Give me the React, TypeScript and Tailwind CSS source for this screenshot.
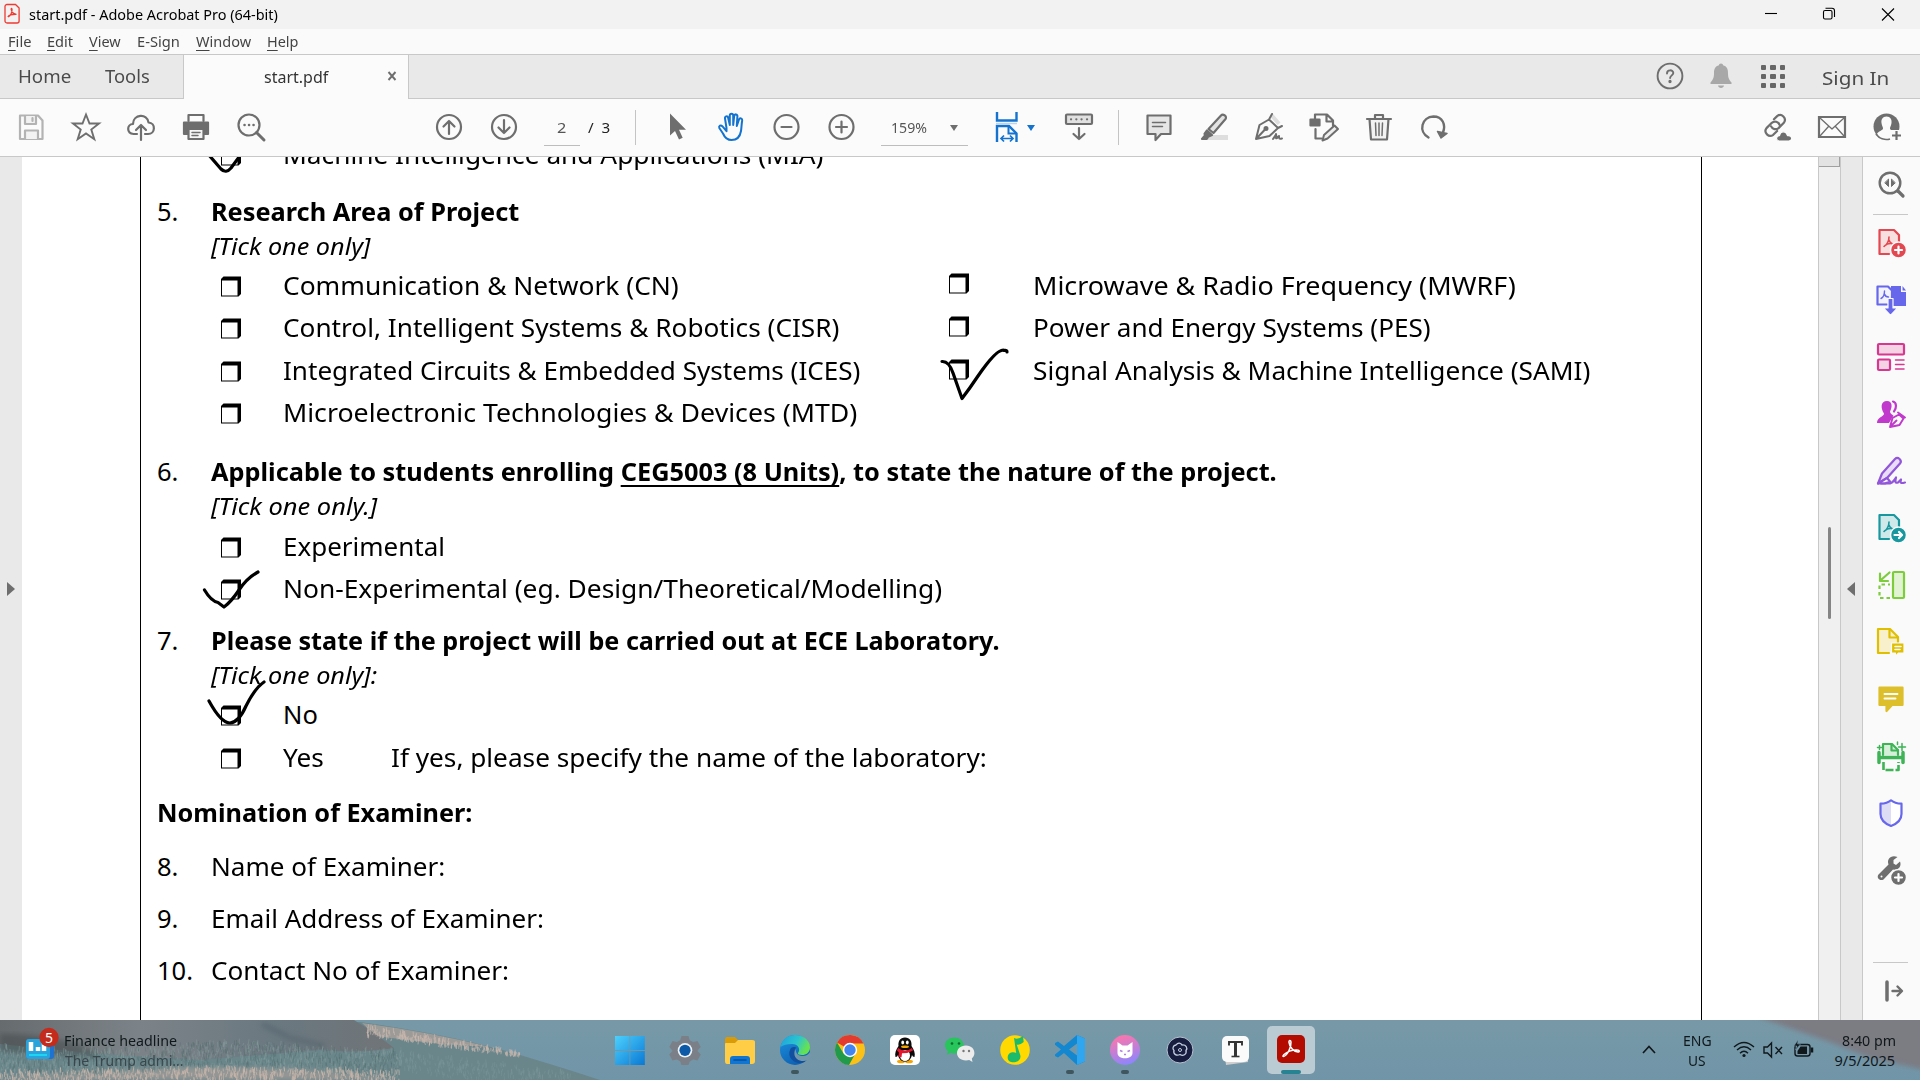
import React, { useLayoutEffect, useRef, useState } from "react";

/* Text squeezed or stretched horizontally so that it fills a known width. */
function Fit({ w, className = "", children }: { w: number; className?: string; children: React.ReactNode }) {
  const ref = useRef<HTMLSpanElement>(null);
  const [s, setS] = useState(1);
  useLayoutEffect(() => {
    if (ref.current) setS(w / ref.current.offsetWidth);
  }, [w]);
  return (
    <span className="block shrink-0" style={{ width: w }}>
      <span ref={ref} className={"inline-block origin-left whitespace-nowrap " + className} style={{ transform: `scaleX(${s})` }}>
        {children}
      </span>
    </span>
  );
}

function Ic({ children, c = "#6e6e6e", sw = 2.2 }: { children: React.ReactNode; c?: string; sw?: number }) {
  return (
    <svg width="32" height="32" viewBox="0 0 32 32" fill="none" stroke={c} color={c} strokeWidth={sw} strokeLinejoin="round" strokeLinecap="round" className="block shrink-0">
      {children}
    </svg>
  );
}

function Slot({ children }: { children?: React.ReactNode }) {
  return <div className="flex w-[55px] shrink-0 justify-center">{children}</div>;
}

/* ---------- window chrome ---------- */

function TitleBar() {
  return (
    <div className="flex h-[29px] shrink-0 items-center bg-[#f2f2f2] text-[14.5px] text-black">
      <svg width="17" height="22" viewBox="0 0 17 22" className="ml-1 -mt-0.5" fill="none" stroke="#ee3a30" strokeWidth="1.3">
        <path d="M3 1.5h8.5l3.6 3.6V18a2 2 0 0 1-2 2H3a2 2 0 0 1-2-2V3.500a2 2 0 0 1 2-2z" />
        <path d="M4 14c2-1 4-4 4-7.500 0-1.500-1-1.300-.8 0 .4 2.500 3 5 5.300 4.800M4 14c0-1.500 4-3 8.500-2.700" />
      </svg>
      <div className="ml-2 flex-1">
        <Fit w={249}>start.pdf - Adobe Acrobat Pro (64-bit)</Fit>
      </div>
      <svg width="150" height="29" viewBox="0 0 150 29" className="mr-5" fill="none" stroke="#000" strokeWidth="1.1">
        <path d="M15 13.500h12" />
        <rect x="73.500" y="10.500" width="8.500" height="8.500" rx="1.500" />
        <path d="M75.500 8.300H82a2.500 2.500 0 0 1 2.500 2.500V17" />
        <path d="M132 8.500l12 12M144 8.500l-12 12" />
      </svg>
    </div>
  );
}

const menus: [string, string, number, string][] = [
  ["F", "ile", 23, "mr-4"],
  ["E", "dit", 26, "mr-4"],
  ["V", "iew", 32, "mr-4"],
  ["", "E-Sign", 43, "mr-4"],
  ["W", "indow", 55, "mr-4"],
  ["H", "elp", 32, ""],
];

function MenuBar() {
  return (
    <div className="flex h-[26px] shrink-0 items-center border-b border-[#c8c8c8] bg-[#fafafa] pl-2 text-[14px] text-[#444]">
      {menus.map(([k, r, w, m]) => (
        <div key={r} className={m}>
          <Fit w={w}>
            <span className="underline underline-offset-[3px]">{k}</span>
            {r}
          </Fit>
        </div>
      ))}
    </div>
  );
}

function TabBar() {
  return (
    <div className="flex h-[44px] shrink-0 bg-[#e9e9e9] text-[#4b4b4b]">
      <div className="flex w-[184px] items-center border-b border-r border-[#c8c8c8] pl-[18px] text-[18px]">
        <Fit w={53}>Home</Fit>
        <div className="ml-[34px]">
          <Fit w={45}>Tools</Fit>
        </div>
      </div>
      <div className="flex w-[224px] items-center bg-[#fbfbfb] pl-[80px] text-[16.5px] text-[#333]">
        <Fit w={64}>start.pdf</Fit>
        <svg width="10" height="10" viewBox="0 0 10 10" className="ml-[59px] -mt-[2px]" stroke="#6e6e6e" strokeWidth="1.900">
          <path d="M1.500 1l7 8M8.500 1l-7 8" />
        </svg>
      </div>
      <div className="flex flex-1 items-center justify-end border-b border-l border-[#c8c8c8] pr-[31px]">
        <div className="-mt-[1px]">
          <Ic sw={1.9}>
            <circle cx="16" cy="16" r="12.400" />
            <path d="M13 13.500c0-4.300 6.300-4 6.300-.5 0 2.300-3.200 2.500-3.200 5" />
            <circle cx="16" cy="21.500" r=".7" fill="currentColor" />
          </Ic>
        </div>
        <div className="ml-[19px] -mt-[1px]">
          <svg width="32" height="32" viewBox="0 0 32 32" fill="#a8a8a8">
            <path d="M16 3.500c1.300 0 2 .8 2 1.800 4 1 5 4 5 7.700 0 5 1 6.700 3.500 9.500v1.500h-21v-1.500C8 19.700 9 18 9 13c0-3.700 1-6.700 5-7.700 0-1 .7-1.800 2-1.800z" />
            <path d="M13 25.500h6c-.3 3.300-5.700 3.300-6 0z" />
          </svg>
        </div>
        <div className="ml-[24px] grid w-[24px] grid-cols-3 gap-[4px]">
          {[...Array(9)].map((_, i) => (
            <span key={i} className="h-[5.300px] rounded-[1px] bg-[#666]" />
          ))}
        </div>
        <div className="ml-[37px] mt-[2px] text-[18.5px]">
          <Fit w={67}>Sign In</Fit>
        </div>
      </div>
    </div>
  );
}

function Toolbar() {
  return (
    <div className="flex h-[58px] shrink-0 items-center border-b border-[#c8c8c8] bg-[#fbfbfb] pb-[2px] pl-[3px] text-[14.5px]">
      <Slot>
        <Ic c="#b3b3b3">
          <path d="M5 4.500h18l4.500 5V28H5z" />
          <path d="M10 5v8h11V5M10 28v-8.500h13V28" fill="#f2f2f2" />
          <path d="M17.500 7v3" />
        </Ic>
      </Slot>
      <Slot>
        <Ic sw={1.9}>
          <path strokeLinejoin="miter" d="M16 3.500l3.500 9h9.500l-7.700 6 3 9.700L16 22.500l-8.300 5.700 3-9.700-7.700-6h9.500z" />
        </Ic>
      </Slot>
      <Slot>
        <Ic>
          <path d="M12 23H8.500C1.500 22.500 1.500 13.500 8 13 8 3 22.500 2 23.500 11.500c7.500.5 7 11.500-.5 11.500h-3M16 29V14.500M11 19l5-5 5 5" />
        </Ic>
      </Slot>
      <Slot>
        <Ic>
          <path d="M8.500 10V4h15v6" />
          <path d="M4 11.500h24V23h-3.500v-5h-17v5H4z" fill="currentColor" />
          <path d="M8.500 18h15v10h-15z" fill="#f5f5f5" />
          <path d="M12 21.500h8M12 24.500h6" strokeWidth="1.500" />
        </Ic>
      </Slot>
      <Slot>
        <Ic>
          <circle cx="14" cy="14" r="10.500" />
          <path d="M21.500 21.500l7.500 7.500" strokeWidth="3" />
          <path d="M9.500 14h.1M14 14h.1M18.500 14h.1" strokeWidth="2.500" />
        </Ic>
      </Slot>
      <div className="ml-[143px] flex">
        <Slot>
          <Ic>
            <circle cx="16" cy="16" r="12" />
            <path d="M16 23V10M10.500 15.500L16 10l5.500 5.500" />
          </Ic>
        </Slot>
        <Slot>
          <Ic>
            <circle cx="16" cy="16" r="12" />
            <path d="M16 9v13M10.500 16.500L16 22l5.500-5.500" />
          </Ic>
        </Slot>
      </div>
      <div className="ml-[13px] mt-[4px] flex h-[34px] w-[36px] items-center border-b border-[#bdbdbd] pl-[13px] text-[#555]">
        <Fit w={9}>2</Fit>
      </div>
      <div className="ml-[8px] mt-[2px] text-[#222]">
        <Fit w={22}>/&nbsp; 3</Fit>
      </div>
      <div className="ml-[25px] mt-[2px] h-[35px] w-px bg-[#c4c4c4]" />
      <div className="ml-[13px] flex">
        <Slot>
          <svg width="32" height="32" viewBox="0 0 32 32" fill="#6e6e6e">
            <path d="M9 2.500v22l5-4.500 4 8.500 3.700-1.700-3.700-8h7z" />
          </svg>
        </Slot>
        <Slot>
          <Ic c="#1473cf" sw={2}>
            <path d="M10.500 17L9 7.500c-.4-2.500 2.700-3 3.200-.5L13.800 14V4.500c0-2.500 3.400-2.500 3.400 0V14l1-9c.3-2.400 3.300-2 3.200.3L20.800 15l2.200-6.500c.8-2 3.600-1.200 3.200 1-.7 3.500-.6 6.500-1.200 10.500-1 6-4 9-9.500 9-5 0-7-3-8.500-6.500L3.300 17c-.8-2.300 1.500-3.300 3-1.800l4.200 5z" />
          </Ic>
        </Slot>
        <Slot>
          <Ic>
            <circle cx="15.500" cy="16" r="12" />
            <path d="M10.500 16h10" />
          </Ic>
        </Slot>
        <Slot>
          <Ic>
            <circle cx="15.500" cy="16" r="12" />
            <path d="M10 16h11M15.500 10.500v11" />
          </Ic>
        </Slot>
      </div>
      <div className="ml-[12px] mt-[4px] flex h-[34px] w-[87px] items-center justify-between border-b border-[#bdbdbd] pl-[10px] pr-[10px] text-[#555]">
        <Fit w={36}>159%</Fit>
        <svg width="8" height="6" viewBox="0 0 8 6" fill="#6e6e6e">
          <path d="M0 0h8L4 6z" />
        </svg>
      </div>
      <div className="ml-[23px] flex items-center">
        <Ic c="#1473cf" sw={2.400}>
          <g strokeLinecap="butt" strokeLinejoin="miter">
            <path d="M6 1v8.500h19.500V1M6 31V15h12l7.500 7.500V31" />
            <path d="M17.500 15v7.500H25" strokeWidth="2" />
            <path d="M5 12.500h21" stroke="#b9d4f1" strokeWidth="1.500" />
            <path d="M10 27.500h12M13 24.500l-3 3 3 3M19 24.500l3 3-3 3" strokeWidth="1.700" />
          </g>
        </Ic>
        <svg width="8" height="6" viewBox="0 0 8 6" className="ml-[4px] mt-[2px]" fill="#1473cf">
          <path d="M0 0h8L4 6z" />
        </svg>
      </div>
      <div className="ml-[28px] w-[32px]">
        <Ic>
          <rect x="3" y="3.500" width="26" height="9.500" rx="1" fill="#e0e0e0" />
          <path d="M8 8.300h.1M13.300 8.300h.1M18.500 8.300h.1M24 8.300h.1" />
          <path d="M16 17v11M10.500 23l5.500 5 5.500-5" />
        </Ic>
      </div>
      <div className="ml-[23px] mt-[2px] h-[35px] w-px bg-[#c4c4c4]" />
      <div className="ml-[12.500px] flex flex-1">
        <Slot>
          <Ic>
            <path d="M4.500 4.500h23V23H18l-5.500 6v-6h-8z" fill="#e6e6e6" />
            <path d="M9.500 11.500h13M9.500 15.500h10" strokeWidth="1.500" />
          </Ic>
        </Slot>
        <Slot>
          <Ic>
            <path d="M12 24h18v5H7z" fill="#dedede" stroke="none" />
            <path d="M10.500 18L23 4.500c2-2.200 6.500 1 4.500 3.500L15.500 22z" fill="#e3e3e3" />
            <path d="M9 19.500l5 4.500-4.500 2-3-3zM4 28l3-3.500 2.500 2.300-1 1.200z" fill="currentColor" />
          </Ic>
        </Slot>
        <Slot>
          <Ic sw={2}>
            <path d="M20 3l7.500 8.500-3 2.500-7-8z" fill="#dedede" stroke="none" />
            <path d="M19 3l-3 5.500L25 17l4-2M16 8.500l-9.500 5.500L3 28l13.500-3L25 17M3.500 27.500l8.500-9" />
            <circle cx="13" cy="17.500" r="1.500" fill="currentColor" />
            <path d="M20 28c2-3 3-4 3-5 1 4-1 5 1 4l2-2c0 3 0 3 3 2.500" />
          </Ic>
        </Slot>
        <Slot>
          <Ic>
            <path d="M7 8V3.500h12l6 6v5M18.500 4v6.500H25M7.500 18v9.500h6" />
            <rect x="2.500" y="8.500" width="9" height="6" fill="currentColor" />
            <path d="M16 24L26.500 14.500l3.500 3.500-10.500 9.500-5 2z" fill="#eee" strokeWidth="2" />
          </Ic>
        </Slot>
        <Slot>
          <Ic>
            <path d="M6.500 8h19l-1.500 20.500H8zM4 8h24M12 7V4h8v3" fill="#f2f2f2" />
            <path d="M12.500 12l.5 12.500M16 12v12.500M19.500 12l-.5 12.500" strokeWidth="1.500" />
          </Ic>
        </Slot>
        <Slot>
          <Ic sw={2.400}>
            <path d="M10.500 26.500C0 20.500 3.500 6 15.500 5.500c9 0 12.500 8 9.500 16" />
            <path d="M19.500 20.500l9.500 2-6 4.500z" fill="currentColor" strokeWidth="1.500" />
          </Ic>
        </Slot>
      </div>
      <div className="flex pr-[6px]">
        <Slot>
          <Ic>
            <g transform="rotate(-45 14 15)">
              <path d="M12 20H6.500a4.800 4.800 0 0 1 0-9.500H14a4.800 4.800 0 0 1 4 7" />
              <path d="M18 9.500h4.500a4.800 4.800 0 0 1 0 9.500H15a4.800 4.800 0 0 1-4-6.500" />
            </g>
            <path d="M18 30c-4-1-2.500-5.500.5-5.300 1-5.200 6.500-5.200 8 0 5-.7 5.500 4.500 1.500 5.300z" fill="currentColor" stroke="#fbfbfb" strokeWidth="1.200" />
          </Ic>
        </Slot>
        <Slot>
          <Ic>
            <path strokeLinejoin="miter" d="M3 6h26v20H3z" />
            <path d="M4 7l12 11L28 7M4 25l8.500-9.500M28 25l-8.500-9.500" strokeWidth="1.300" />
          </Ic>
        </Slot>
        <Slot>
          <svg width="32" height="32" viewBox="0 0 32 32" fill="#6e6e6e">
            <circle cx="15.500" cy="15.500" r="13" />
            <path d="M15.500 5.500c4 0 5.500 3 5 6.500-.3 2.500-1.500 4-1.500 5.500 0 2 5 2.500 6 5.500l-3 5.500h-13L6 23c1-3 6-3.500 6-5.500 0-1.500-1.200-3-1.500-5.500-.5-3.500 1-6.500 5-6.500z" fill="#fbfbfb" />
            <path d="M19 19h13v13H19z" fill="#fbfbfb" />
            <path d="M25.500 20v9M21 24.500h9" stroke="#6e6e6e" strokeWidth="2.200" />
            <path d="M5 23a13 13 0 0 0 14 5" stroke="#6e6e6e" strokeWidth="1.800" fill="none" />
          </svg>
        </Slot>
      </div>
    </div>
  );
}

/* ---------- document ---------- */

function Box() {
  return (
    <svg width="21" height="21" viewBox="0 0 21 21" className="mt-[6px] block shrink-0">
      <path d="M0 3L2.500 .5H20V18L17.500 20.500H0z" fill="#000" />
      <path d="M1 4.500H16.500v15h-15.500z" fill="#fff" />
    </svg>
  );
}

function Heading({ n, mt, w, children }: { n: string; mt: string; w: number; children: React.ReactNode }) {
  return (
    <div className={"flex h-[30px] leading-[30px] " + mt}>
      <div className="w-[54px]">
        <Fit w={n.length > 2 ? 36 : 21}>{n}</Fit>
      </div>
      <Fit w={w} className="font-bold">{children}</Fit>
    </div>
  );
}

function Hint({ w, mt, children }: { w: number; mt: string; children: string }) {
  return (
    <div className={"flex h-[30px] pl-[54px] text-[23px] italic leading-[32px] " + mt}>
      <Fit w={w}>{children}</Fit>
    </div>
  );
}

type Opt = [string, number];
function Options({ mt, left, right, lift }: { mt: string; left: Opt; right?: Opt; lift?: boolean }) {
  return (
    <div className={"flex h-[30px] pl-[64px] leading-[30px] " + mt}>
      <div className="flex w-[728px]">
        <div className="w-[62px]">
          <Box />
        </div>
        <Fit w={left[1]}>{left[0]}</Fit>
      </div>
      {right && (
        <>
          <div className={"w-[84px] " + (lift ? "-mt-[3px]" : "-mt-[2px]")}>
            <Box />
          </div>
          <Fit w={right[1]}>{right[0]}</Fit>
        </>
      )}
    </div>
  );
}

function Page() {
  return (
    <div className="relative h-full flex-1 overflow-hidden bg-white">
      <div className="ml-[118px] flow-root h-full w-[1562px] border-x border-black pl-[16px] text-[25.5px] text-black [font-family:'Noto_Sans',sans-serif]">
        <Options mt="-mt-[18px]" left={["Machine Intelligence and Applications (MIA)", 541]} />
        <Heading n="5." mt="mt-[27px]" w={308}>Research Area of Project</Heading>
        <Hint w={159} mt="mt-[4px]">[Tick one only]</Hint>
        <Options mt="mt-[10px]" left={["Communication & Network (CN)", 396]} right={["Microwave & Radio Frequency (MWRF)", 483]} lift />
        <Options mt="mt-[12px]" left={["Control, Intelligent Systems & Robotics (CISR)", 556]} right={["Power and Energy Systems (PES)", 398]} />
        <Options mt="mt-[13px]" left={["Integrated Circuits & Embedded Systems (ICES)", 577]} right={["Signal Analysis & Machine Intelligence (SAMI)", 557]} />
        <Options mt="mt-[12px]" left={["Microelectronic Technologies & Devices (MTD)", 574]} />
        <Heading n="6." mt="mt-[29px]" w={1066}>
          Applicable to students enrolling{" "}
          <span className="underline decoration-2 underline-offset-[4px] [text-decoration-skip-ink:none]">CEG5003 (8 Units)</span>, to state the nature of the project.
        </Heading>
        <Hint w={166} mt="mt-[4px]">[Tick one only.]</Hint>
        <Options mt="mt-[11px]" left={["Experimental", 162]} />
        <Options mt="mt-[12px]" left={["Non-Experimental (eg. Design/Theoretical/Modelling)", 659]} />
        <Heading n="7." mt="mt-[22px]" w={789}>Please state if the project will be carried out at ECE Laboratory.</Heading>
        <Hint w={166} mt="mt-[4px]">[Tick one only]:</Hint>
        <Options mt="mt-[10px]" left={["No", 35]} />
        <div className="mt-[13px] flex h-[30px] pl-[64px] leading-[30px]">
          <div className="w-[62px]">
            <Box />
          </div>
          <div className="w-[108px]">
            <Fit w={41}>Yes</Fit>
          </div>
          <Fit w={596}>If yes, please specify the name of the laboratory:</Fit>
        </div>
        <div className="mt-[25px] h-[30px] leading-[30px]">
          <Fit w={315} className="font-bold">Nomination of Examiner:</Fit>
        </div>
        <div className="mt-[24px] flex h-[30px] leading-[30px]">
          <div className="w-[54px]"><Fit w={21}>8.</Fit></div>
          <Fit w={234}>Name of Examiner:</Fit>
        </div>
        <div className="mt-[22px] flex h-[30px] leading-[30px]">
          <div className="w-[54px]"><Fit w={21}>9.</Fit></div>
          <Fit w={333}>Email Address of Examiner:</Fit>
        </div>
        <div className="mt-[22px] flex h-[30px] leading-[30px]">
          <div className="w-[54px]"><Fit w={36}>10.</Fit></div>
          <Fit w={298}>Contact No of Examiner:</Fit>
        </div>
      </div>
      {/* hand-drawn ticks */}
      <svg className="pointer-events-none absolute left-0 top-0" width="1100" height="640" viewBox="22 157 1100 640" fill="none" stroke="#000" strokeWidth="3.200" strokeLinecap="round" strokeLinejoin="round">
        <path d="M208 154L221 169Q226 174 231 168L242 153" />
        <path d="M942 361.500Q949 361 953 373Q960 393 962 398.500Q970 388 978 376Q998 347 1004.500 350.500Q1007 350 1007 352" />
        <path d="M204.500 590Q211 601 218 602.500L224 607Q231 602 239 590Q247 578 258 572" />
        <path d="M209 701Q221 723 230 723Q239 722 246 706Q255 688 264 682" />
      </svg>
    </div>
  );
}

/* ---------- right tool rail ---------- */

function PdfBase({ fill }: { fill: string }) {
  return (
    <>
      <path d="M4.500 3H19l5 5v19H4.500z" fill={fill} stroke="none" />
      <path d="M14 27H4.500V3H19l5 5v7" />
      <path d="M9 19.500c3-1.500 5-6 5-9.500M14 13c1 3 3 4 5 4M9.500 19c2-2 6-3 9-2" strokeWidth="1.600" />
    </>
  );
}

function Rail() {
  return (
    <div className="flex w-[58px] shrink-0 flex-col items-center border-l border-[#c8c8c8] bg-[#fafafa] pr-[1.500px]">
      <div className="mt-[11px]">
        <Ic sw={2.400}>
          <circle cx="15" cy="15" r="10.300" />
          <path d="M23 23l5 5" strokeWidth="3.200" />
          <path d="M13.500 11.500v7L10 15zM16.500 11.500v7L20 15z" fill="currentColor" strokeWidth="1" />
        </Ic>
      </div>
      <div className="mt-[14px] h-px w-[35px] bg-[#c8c8c8]" />
      <div className="mt-[12px] flex flex-col gap-[25px]">
        <Ic c="#e34850">
          <PdfBase fill="#f7dfe0" />
          <circle cx="23.500" cy="23" r="8" fill="currentColor" stroke="#fafafa" strokeWidth="1.500" />
          <path d="M23.500 19.500v7M20 23h7" stroke="#fff" />
        </Ic>
        <Ic c="#6767ec">
          <path d="M16 2h10v6h5v14H16z" fill="currentColor" stroke="none" />
          <path d="M27.500 2v4.500H31z" fill="currentColor" stroke="none" />
          <path d="M12 20.500H2.500V2.500H13l4 4v9" fill="#f3f3fd" />
          <path d="M6 14.500c2-1 3.500-4 3.500-7.500M9.500 10c.5 2 2 3 4 3" strokeWidth="1.400" />
          <path d="M13 14.500h5V24h4.500L15.500 31.500 8.500 24H13z" fill="currentColor" stroke="#fafafa" strokeWidth="1.200" />
        </Ic>
        <Ic c="#d83790">
          <rect x="3" y="3" width="26" height="10.500" rx="1" fill="#f5d3e5" />
          <rect x="3" y="18.500" width="12" height="10.500" rx="1" fill="#f5d3e5" />
          <path d="M20.500 19H29M20.500 23.500H29M20.500 28H29" strokeWidth="1.500" />
        </Ic>
        <Ic c="#c038cc">
          <path d="M12 3c5.500 0 5.500 6 3 10.500.5 3 2.500 3 3.500 4L14 25H2c0-6 7-6 7-9.500C5.500 10 5.500 3 12 3z" fill="currentColor" stroke="none" />
          <path d="M18 3.500c4 1 3.500 7 1 10" />
          <path d="M15 29l2.500-9 6.500-3.500 4.500 4-4 6.500zM23 14.500l7 5M15.500 28.500l6-6" fill="#fafafa" strokeWidth="1.900" />
        </Ic>
        <Ic c="#9256d9">
          <path d="M3 28.500l4-10L20 4c3-3 7.500 1.500 5 4.500L12 23z" fill="#e9ddf7" />
          <path d="M3 28.500l9-5.500 3 3.500-5 2z" fill="#fafafa" />
          <path d="M6 28.500h7c5 0 6-3 8-6-1 4-1 6 2 5l3-3c-1 4 0 4 4 3" />
        </Ic>
        <Ic c="#19979f">
          <PdfBase fill="#cfe9ea" />
          <circle cx="23.500" cy="23" r="8" fill="currentColor" stroke="#fafafa" strokeWidth="1.500" />
          <path d="M19.500 23h7M24 20l3 3-3 3" stroke="#fff" />
        </Ic>
        <Ic c="#7ccc3c">
          <rect x="18" y="3" width="11" height="26" rx="1" fill="#e2f3d3" />
          <path d="M15 29H4.500V15.500H15" strokeDasharray="3.500 3" strokeLinecap="butt" />
          <path d="M14.500 3.500l-8 7M5 4.500V12h8" />
        </Ic>
        <Ic c="#dfbf00">
          <path d="M14 27H3V3h12l8 8v5" fill="#f8f0cb" />
          <path d="M14.500 3.500v8H22" />
          <path d="M16.500 17h12.500v10h-5.500l-3 3.500V27h-4z" fill="currentColor" stroke="#fafafa" strokeWidth="1.200" />
          <path d="M20 20.500h6M20 23.500h5" stroke="#fff" strokeWidth="1.500" />
        </Ic>
        <Ic c="#ddbf2b">
          <path d="M4.500 4.500h23V22H17l-5.500 6v-6h-7z" fill="currentColor" />
          <path d="M9.500 11h13M9.500 15.500h11" stroke="#fff" strokeWidth="1.900" />
        </Ic>
        <Ic c="#3eb456">
          <path d="M8 15V4h9l6 6v5" fill="#d5efd9" />
          <path d="M16.500 4v6.500H23" />
          <path d="M4 12.500v10M28 12.500v10M4 17.500h24" strokeWidth="3.500" />
          <path d="M8.500 22v8h15v-8" strokeDasharray="8 2" strokeLinecap="butt" strokeWidth="2.600" />
          <path d="M27 3.500v7M23.500 7h7M4.500 5.500v4M2.500 7.500h4M22.500 2v2.500" strokeWidth="1.500" />
        </Ic>
        <Ic c="#6767ec">
          <path d="M16 3.500l10.500 3.500v10c0 6-5 9.500-10.500 12z" fill="#fff" stroke="none" />
          <path d="M16 3C13 6 9 6.500 5.500 6.500V17c0 6 4.500 9.500 10.500 12z" fill="#deddf6" stroke="none" />
          <path d="M16 3.300c3 2.700 7 3.400 10.500 3.400V17c0 6-4.500 9.700-10.500 12-6-2.300-10.500-6-10.500-12V6.700C9 6.700 13 6 16 3.300z" />
        </Ic>
        <Ic>
          <path d="M25 7.500l-4 3.500-2.500-1.500V6l4-3C16 .5 11.500 5 13.500 10.500L3.500 20.500c-2.500 3.500 1.500 7 5 5L18 15.500c5 1.500 9-3 7-8z" fill="currentColor" stroke="none" />
          <circle cx="6.500" cy="22.500" r="1" fill="#fafafa" stroke="none" />
          <circle cx="23.500" cy="23.500" r="8" fill="currentColor" stroke="#fafafa" strokeWidth="1.500" />
          <path d="M23.500 20v7M20 23.500h7" stroke="#fff" />
        </Ic>
      </div>
      <div className="mt-[76px] h-px w-[35px] bg-[#c8c8c8]" />
      <div className="mt-[12px] ml-[4px]">
        <Ic>
          <path d="M10 7v18" strokeWidth="3.500" />
          <path d="M15.500 16h9M20.500 11.500L25 16l-4.500 4.500" strokeWidth="2.400" />
        </Ic>
      </div>
    </div>
  );
}

/* ---------- taskbar ---------- */

const rnd = (i: number) => {
  const v = Math.sin(i * 12.9898 + 78.233) * 43758.5453;
  return v - Math.floor(v);
};

/* Grass blades scattered over a band that starts at y(x) and is d(x) deep. */
function blades(n: number, x0: number, x1: number, y: (x: number) => number, d: (x: number) => number, seed: number) {
  return [...Array(n)]
    .map((_, i) => {
      const k = seed * 1000 + i * 4;
      const x = x0 + rnd(k) * (x1 - x0);
      const yy = y(x) + rnd(k + 1) * d(x);
      return `M${x.toFixed(1)} ${yy.toFixed(1)}l${(rnd(k + 2) * 2.4 - 1.2).toFixed(1)} ${(-2.5 - rnd(k + 3) * 3.5).toFixed(1)}`;
    })
    .join("");
}

function Wallpaper() {
  return (
    <svg className="absolute inset-0" width="1920" height="60" viewBox="0 0 1920 60" fill="none">
      <defs>
        <linearGradient id="sea" x1="0" y1="0" x2="0" y2="1">
          <stop offset="0" stopColor="#7799a7" />
          <stop offset="1" stopColor="#7195a8" />
        </linearGradient>
        <linearGradient id="rock" x1="0" y1="0" x2="1" y2="0">
          <stop offset="0" stopColor="#666b6e" />
          <stop offset=".35" stopColor="#7c8388" />
          <stop offset=".7" stopColor="#6a7880" />
          <stop offset="1" stopColor="#707477" />
        </linearGradient>
        <filter id="soft"><feGaussianBlur stdDeviation="2.500" /></filter>
      </defs>
      <rect width="1920" height="60" fill="url(#sea)" />
      <path d="M360 2Q460 16 530 38Q570 50 600 60H0V0z" fill="#6a868b" />
      <path d="M362 3Q430 12 490 27L440 24Q400 19 376 16z" fill="#9c9b98" />
      <path d="M0 0H354Q374 12 394 28Q360 34 320 30L200 40 100 34 0 24z" fill="url(#rock)" />
      <path d="M0 14Q60 14 90 30L100 38 0 32z" fill="#454c4e" opacity=".55" filter="url(#soft)" />
      <path d="M262 4L290 18 325 26" stroke="#55646d" strokeWidth="5" opacity=".6" filter="url(#soft)" />
      <path d="M0 58Q120 50 200 47Q330 48 400 60H0z" fill="#a29c98" opacity=".75" filter="url(#soft)" />
      <path d={blades(800, 0, 400, (x) => 28 + Math.sin(x / 50) * 4, () => 26, 3)} stroke="#849b9b" strokeWidth=".8" opacity=".6" />
      <path d={blades(600, 0, 400, (x) => 28 + Math.sin(x / 50) * 4, () => 24, 7)} stroke="#536c6c" strokeWidth=".8" opacity=".55" />
      <path d={blades(600, 0, 400, (x) => 54 - Math.sin(x / 130) * 4, () => 12, 11)} stroke="#cbb7ad" strokeWidth=".9" opacity=".75" />
      <path d={blades(300, 395, 570, (x) => 32 + (x - 395) * 0.13, () => 20, 17)} stroke="#819a9c" strokeWidth=".8" opacity=".45" />
      <path d={blades(220, 365, 520, (x) => 7 + (x - 365) * 0.18, (x) => 11 - (x - 365) * 0.05, 23)} stroke="#c9b7ae" strokeWidth=".9" opacity=".75" />
      <path d="M1755 -4L1830 22 1870 38 1925 50V-4z" fill="#7c7b83" filter="url(#soft)" />
    </svg>
  );
}

function App32({ children, dot }: { children: React.ReactNode; dot?: boolean }) {
  return (
    <div className="flex h-[60px] w-[55px] flex-col items-center pt-[14px]">
      <svg width="32" height="32" viewBox="0 0 32 32" fill="none" className="block">{children}</svg>
      {dot && <span className="mt-[4px] h-[4px] w-[8px] rounded-full bg-[#40565f]" />}
    </div>
  );
}

function Taskbar() {
  return (
    <div className="relative h-[60px] shrink-0 overflow-hidden text-[14.5px] text-[#10181c]">
      <Wallpaper />
      <div className="relative flex h-full">
        <div className="flex w-[602.500px] pl-[22px]">
          <svg width="40" height="46" viewBox="0 0 40 46" className="mt-[4px]">
            <rect x="4" y="15" width="28" height="20" rx="3" fill="#1f72cf" />
            <rect x="4" y="15" width="24" height="20" rx="3" fill="#29a3db" />
            <path d="M9 27V18M16 27v-4M22 27v-8" stroke="#fff" strokeWidth="4.500" />
            <path d="M7 31h18" stroke="#1bd5f3" strokeWidth="2" />
            <circle cx="27" cy="13.500" r="9.700" fill="#c42b1c" />
          </svg>
          <span className="relative -ml-[17px] mt-[8px] w-[10px] text-[14px] leading-[20px] text-white">5</span>
          <div className="ml-[9px] pt-[10px] leading-[20px]">
            <Fit w={113}>Finance headline</Fit>
            <div className="ml-px text-[#39474c]">
              <Fit w={119}>The Trump admi...</Fit>
            </div>
          </div>
        </div>
        <App32>
          <defs>
            <linearGradient id="win" x1="0" y1="0" x2="1" y2="1">
              <stop offset="0" stopColor="#4cd0fd" />
              <stop offset="1" stopColor="#0a78d4" />
            </linearGradient>
          </defs>
          <path d="M1 2h14.500v14H1zM16.300 2h14.500v14H16.300zM1 17h14.500v14H1zM16.300 17h14.500v14H16.300z" fill="url(#win)" />
        </App32>
        <App32>
          <path d="M12.500 2h7l1.300 4.200 3.300 1.900 4.400-1 3.300 6-3 3.200v1l3 3.300-3.300 6-4.400-1-3.300 1.900L19.500 31h-7l-1.300-3.500-3.300-1.900-4.400 1-3.300-6 3-3.300v-1l-3-3.200 3.300-6 4.400 1 3.300-1.900z" fill="#7b8088" />
          <circle cx="16" cy="16.300" r="7.300" fill="#eef2f5" />
          <circle cx="16" cy="16.300" r="5.600" fill="#0c59a8" />
        </App32>
        <App32>
          <path d="M1 6q0-3 2-3h8l3 3h14q3 0 3 3v5H1z" fill="#d99b08" />
          <path d="M1 10q0-1 1-1h9l3-3h14q3 0 3 2v19q0 3-3 3H3q-2 0-2-3z" fill="#ffce46" />
          <path d="M6 30v-5q0-3 3-3h14q3 0 3 3v5z" fill="#1176d2" />
          <path d="M10 26h12" stroke="#0a4e9c" strokeWidth="1.600" strokeLinecap="round" />
        </App32>
        <App32 dot>
          <defs>
            <linearGradient id="edge" x1="0" y1="0" x2="1" y2=".4">
              <stop offset="0" stopColor="#1ca0e0" />
              <stop offset=".6" stopColor="#2cc5cd" />
              <stop offset="1" stopColor="#66e251" />
            </linearGradient>
            <linearGradient id="edgeBody" x1="0" y1="0" x2=".5" y2="1">
              <stop offset="0" stopColor="#1b93e0" />
              <stop offset="1" stopColor="#0f62b4" />
            </linearGradient>
          </defs>
          <circle cx="16" cy="16" r="15" fill="url(#edgeBody)" />
          <path d="M1.500 13C3 5 9 1 16 1c9 0 15 6 15 12.500 0 5-4 7.500-8 7.500-3 0-4.500-1-4-2 3-4 0-9-6-9-5 0-9 1-11.500 3z" fill="url(#edge)" />
          <path d="M12 14c-5 8 2 15 9 15 3 0 6-1.500 8-4.500-7 2.500-14 0-14-6 0-2 1-4 2.500-5-2-1-4-.5-5.500.5z" fill="#10509f" />
          <path d="M17.500 14.500c-1.500 2-.5 7 5.500 7.500 4 .3 6-1.500 8.500-4l1 5-3 3c-7 3-14-.5-14-6 0-2 .5-4 2-5.500z" fill="#7298a9" />
        </App32>
        <App32>
          <circle cx="16" cy="16" r="15" fill="#fbc116" />
          <path d="M16 16L3 8.500A15 15 0 0 1 29.500 9.500H16z" fill="#e33b2e" />
          <path d="M3 8.500A15 15 0 0 0 15 31l6.500-11.500L9.500 19.500z" fill="#229a4b" />
          <circle cx="16" cy="16" r="7.200" fill="#fff" />
          <circle cx="16" cy="16" r="5.700" fill="#4285f0" />
        </App32>
        <App32>
          <rect x="1" y="1" width="30" height="30" rx="5" fill="#fff" />
          <ellipse cx="12" cy="27.500" rx="4" ry="1.800" fill="#f5a400" />
          <ellipse cx="20" cy="27.500" rx="4" ry="1.800" fill="#f5a400" />
          <path d="M16 3.500c-5 0-7 4-6.500 8.500C7 16 5.500 19 6.500 23c1.500 0 2-1 2.500-2 1 4 3 6.500 7 6.500s6-2.500 7-6.500c.5 1 1 2 2.500 2 1-4-.5-7-3-11C23 7.500 21 3.500 16 3.500z" fill="#0b0b0b" />
          <ellipse cx="16" cy="21.500" rx="5" ry="5.500" fill="#fff" />
          <ellipse cx="13.700" cy="8.500" rx="1.400" ry="2.100" fill="#fff" />
          <ellipse cx="18.300" cy="8.500" rx="1.400" ry="2.100" fill="#fff" />
          <ellipse cx="16" cy="12.700" rx="4" ry="1.300" fill="#f5a400" />
          <path d="M9 14q7 5 14 0l1 2.500q-5 3-11 2.800l-.5 4-3-.5.500-4.500-2-1.500z" fill="#e6142d" />
        </App32>
        <App32>
          <path d="M10.500 3.500c12 0 12.500 16 0 16-1.500 0-3-.4-4-.8L3 21l.8-4C-2 12 1.500 3.500 10.500 3.500z" fill="#28c45c" />
          <circle cx="8" cy="9.500" r="1.300" fill="#0a6b30" /><circle cx="15" cy="9.500" r="1.300" fill="#0a6b30" />
          <path d="M22 11.500c-12 0-12 15 0 15 1.300 0 2.300-.2 3.200-.5l3.300 2-.7-3.500c5-4 2.700-13-5.800-13z" fill="#ececec" />
          <circle cx="19.500" cy="17" r="1.200" fill="#777" /><circle cx="25" cy="17" r="1.200" fill="#777" />
        </App32>
        <App32>
          <circle cx="16" cy="16" r="14.800" fill="#ffd900" />
          <path d="M15 4q4 2 9-2l.7 6q-4 3.500-7 2.500l3.500 10.500c2.500 8-13 10.500-12.500 2 .5-5 6-5.500 8.500-4z" fill="#1bbb6b" />
        </App32>
        <App32 dot>
          <path d="M23 1l8 3.500v23L23 31 10 19l-6 4.500L1 22v-1.500l6-5-6-4.700V9l3-1.500 6 4.500zM23 9.500l-8 6 8 6z" fill="#1387cf" fillRule="evenodd" />
          <path d="M23 1l8 3.500v23L23 31z" fill="#2fa6ef" />
        </App32>
        <App32 dot>
          <defs>
            <linearGradient id="cat" x1=".3" y1="0" x2=".6" y2="1">
              <stop offset="0" stopColor="#ff75aa" />
              <stop offset="1" stopColor="#8b86ff" />
            </linearGradient>
          </defs>
          <circle cx="16" cy="16" r="15" fill="url(#cat)" />
          <path d="M8.500 8l5 3.500h5l5-3.500v11c0 7-15 7-15 0z" fill="#fff" />
          <path d="M11 16.500l2.500 1M21 16.500l-2.500 1M15 20.500h2" stroke="#b57fe0" strokeWidth="1.500" />
        </App32>
        <App32>
          <circle cx="16" cy="16" r="13" fill="#161d3f" stroke="#b8c1cf" strokeWidth="1" />
          <path d="M12 11c2-3 5-2 6 0 4-.5 6 3 4 5.500 1 4-3 6-6 4-4 2-7-1-6-4-2-2-1-5 2-5.500z" stroke="#c3cde0" strokeWidth="1.300" />
          <circle cx="16" cy="16" r="1.500" stroke="#c3cde0" />
        </App32>
        <App32>
          <path d="M4 5l23-2 2 25-22 3z" fill="#cfcfcf" />
          <rect x="3" y="2" width="27" height="26" rx="5" fill="#fafafa" />
          <path d="M10 11.500V8h13v3.500M16.500 8v14" stroke="#333" strokeWidth="1.900" />
          <path d="M16.500 8v14" stroke="#333" strokeWidth="3" />
          <path d="M12.500 22.500h8" stroke="#333" strokeWidth="1.600" />
        </App32>
        <div className="mt-[6px] flex h-[48px] w-[48px] ml-[4px] flex-col items-center rounded-[5px] bg-[#bacbd3] pt-[8px]">
          <svg width="30" height="30" viewBox="0 0 30 30" className="block">
            <rect x="1" y="1" width="28" height="28" rx="5" fill="#b30b00" />
            <path d="M7.500 22.500c3-.5 8-8 7.500-14.500-.2-2-2.300-2-2 .3.500 4.500 4.500 9.500 9 9.700 2 0 1.500-2-.5-2-4-.2-9.500 1-13.500 4.500-1 1-1.500 2-.5 2z" fill="none" stroke="#fff" strokeWidth="1.500" />
          </svg>
          <span className="mt-[6px] h-[4px] w-[20px] rounded-full bg-[#278292]" />
        </div>
        <div className="ml-auto flex pr-[24.500px]">
          <svg width="14" height="60" viewBox="0 0 14 60" fill="none" stroke="#10181c" strokeWidth="1.700">
            <path d="M1 33l6-6.500 6 6.500" />
          </svg>
          <div className="ml-[26.500px] flex w-[30px] flex-col items-center pt-[11px] leading-[19.500px]">
            <Fit w={29}>ENG</Fit>
            <Fit w={18}>US</Fit>
          </div>
          <svg width="84" height="60" viewBox="0 0 84 60" className="ml-[19.500px]" fill="none" stroke="#10181c" strokeWidth="1.400">
            <path d="M2 27q10-9 20 0M5 30q7-6.500 14 0M8 33.200q4-4 8 0" />
            <circle cx="12" cy="35.500" r="1.600" fill="#10181c" stroke="none" />
            <path d="M32 27h3.500l4-4v14l-4-4H32zM43.500 27l6.500 7M50 27L43.500 34" />
            <rect x="63" y="24.500" width="15" height="11.500" rx="2.500" />
            <path d="M80 27.500v5" strokeWidth="2.500" />
            <path d="M65.500 34v-3l3-4.500H75V34z" fill="#10181c" stroke="none" />
            <path d="M66 20l-4 6h3l-1.500 4 5-6h-3z" fill="#10181c" stroke="#7397aa" strokeWidth=".5" />
          </svg>
          <div className="ml-[18px] flex w-[62px] flex-col items-end pt-[10px] leading-[20px]">
            <Fit w={54}>8:40 pm</Fit>
            <Fit w={61}>9/5/2025</Fit>
          </div>
        </div>
      </div>
    </div>
  );
}

export default function App() {
  return (
    <div className="flex h-[1080px] w-[1920px] flex-col overflow-hidden bg-white [font-family:'Noto_Sans','Open_Sans',sans-serif]">
      <TitleBar />
      <MenuBar />
      <TabBar />
      <Toolbar />
      <div className="flex min-h-0 flex-1">
        <div className="flex w-[22px] shrink-0 items-center justify-center bg-[#e9e9e9]">
          <svg width="8" height="14" viewBox="0 0 8 14" fill="#6e6e6e"><path d="M0 0l8 7-8 7z" /></svg>
        </div>
        <Page />
        <div className="flex w-[22px] shrink-0 flex-col items-center border-l border-[#c8c8c8] bg-[#f0f0f0]">
          <div className="h-[10px] w-full border-b border-r border-[#a0a0a0] bg-[#e3e3e3]" />
          <div className="mt-[360px] h-[92px] w-[3px] rounded-full bg-[#858585]" />
        </div>
        <div className="flex w-[22px] shrink-0 items-center justify-center border-l border-[#c8c8c8] bg-[#e9e9e9] pr-[2px]">
          <svg width="8" height="14" viewBox="0 0 8 14" fill="#6e6e6e"><path d="M8 0L0 7l8 7z" /></svg>
        </div>
        <Rail />
      </div>
      <Taskbar />
    </div>
  );
}
